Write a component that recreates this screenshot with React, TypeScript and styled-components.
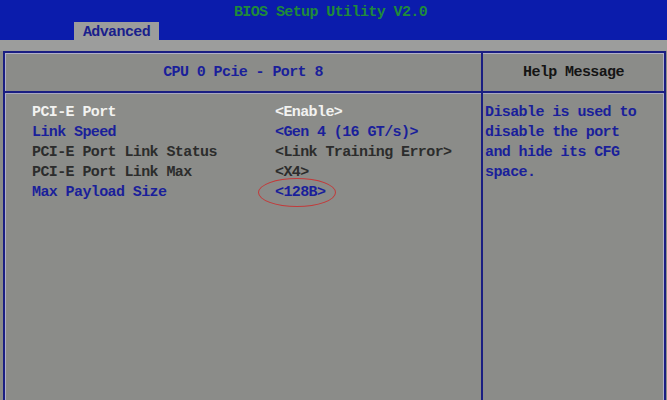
import styled, { createGlobalStyle } from "styled-components";

const GlobalStyle = createGlobalStyle`
  html, body {
    margin: 0;
    padding: 0;
    background: #8b8c89;
    overflow: hidden;
  }
`;

const Screen = styled.div`
  width: 667px;
  height: 400px;
  background: #8b8c89;
  font-family: "Liberation Mono", "DejaVu Sans Mono", monospace;
  font-weight: bold;
  font-size: 15px;
  letter-spacing: -0.6px;
  display: flex;
  flex-direction: column;
  overflow: hidden;
`;

const TopBar = styled.div`
  height: 40px;
  background: #0b1cac;
  display: flex;
  flex-direction: column;
`;

const Title = styled.div`
  height: 22px;
  line-height: 25px;
  text-align: center;
  color: #1f8a3a;
  padding-right: 6px;
`;

const TabRow = styled.div`
  flex: 1;
  display: flex;
  align-items: flex-end;
  padding-left: 74px;
`;

const Tab = styled.div`
  width: 85px;
  height: 18px;
  line-height: 21px;
  background: #9c9d9c;
  color: #1a1f8c;
  text-align: center;
`;

const Band = styled.div`
  height: 11px;
  background: #9c9d9c;
`;

const Frame = styled.div`
  flex: 1;
  display: flex;
  margin: 0 1px 0 3px;
  border: 2px solid #1a1e82;
  border-bottom: none;
  box-shadow: inset 1px 1px 0 #b0b0c8, inset -1px 0 0 #b0b0c8;
`;

const Column = styled.div<{ $width?: number }>`
  display: flex;
  flex-direction: column;
  ${(p) => (p.$width ? `width: ${p.$width}px;` : "flex: 1;")}
  ${(p) => (p.$width ? "border-right: 2px solid #1a1e82;" : "")}
`;

const SectionHead = styled.div<{ $color: string }>`
  height: 38px;
  line-height: 39px;
  text-align: center;
  color: ${(p) => p.$color};
  border-bottom: 2px solid #1a1e82;
  box-shadow: 0 1px 0 #a8a8c0;
`;

const Body = styled.div`
  position: relative;
  padding-top: 10px;
  padding-left: 27px;
`;

const Row = styled.div`
  display: grid;
  grid-template-columns: 243px 1fr;
  height: 20px;
  line-height: 20px;
  white-space: pre;
`;

const Cell = styled.span<{ $color: string }>`
  color: ${(p) => p.$color};
`;

const Ring = styled.div`
  position: absolute;
  left: 253px;
  top: 85px;
  width: 76px;
  height: 27px;
  border: 1.5px solid #c23a3a;
  border-radius: 50%;
`;

const HelpText = styled.div`
  padding: 10px 4px 0 2px;
  line-height: 20px;
  color: #1a1f9a;
  white-space: pre;
`;

const WHITE = "#f2f2f0";
const BLUE = "#1a1f9a";
const DARK = "#2c2c2c";

const rows = [
  { label: "PCI-E Port", value: "<Enable>", color: WHITE },
  { label: "Link Speed", value: "<Gen 4 (16 GT/s)>", color: BLUE },
  { label: "PCI-E Port Link Status", value: "<Link Training Error>", color: DARK },
  { label: "PCI-E Port Link Max", value: "<X4>", color: DARK },
  { label: "Max Payload Size", value: "<128B>", color: BLUE },
];

export default function App() {
  return (
    <Screen>
      <GlobalStyle />
      <TopBar>
        <Title>BIOS Setup Utility V2.0</Title>
        <TabRow>
          <Tab>Advanced</Tab>
        </TabRow>
      </TopBar>
      <Band />
      <Frame>
        <Column $width={476}>
          <SectionHead $color={BLUE}>CPU 0 Pcie - Port 8</SectionHead>
          <Body>
            {rows.map((r) => (
              <Row key={r.label}>
                <Cell $color={r.color}>{r.label}</Cell>
                <Cell $color={r.color}>{r.value}</Cell>
              </Row>
            ))}
            <Ring />
          </Body>
        </Column>
        <Column>
          <SectionHead $color="#141414">Help Message</SectionHead>
          <HelpText>
            {"Disable is used to\ndisable the port\nand hide its CFG\nspace."}
          </HelpText>
        </Column>
      </Frame>
    </Screen>
  );
}
